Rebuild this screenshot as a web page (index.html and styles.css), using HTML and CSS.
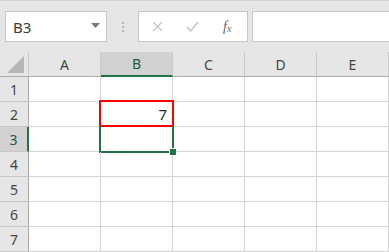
FILE: index.html
```html
<!DOCTYPE html>
<html lang="ja">
<head>
    <meta charset="UTF-8">
    <title>Excel</title>
    <link rel="stylesheet" href="styles.css">
</head>
<body>
    <div class="formula-bar">
        <div class="name-box">
            <span class="name-text">B3</span>
            <svg class="drop" width="9" height="5" viewBox="0 0 9 5"><path d="M0 0H9L4.5 5Z" fill="#7a7a7a"/></svg>
        </div>
        <div class="dots"><i></i><i></i><i></i></div>
        <div class="fx-box">
            <svg class="ico" width="11" height="11" viewBox="0 0 11 11"><path d="M1 1L10 10M10 1L1 10" stroke="#c3c3c3" stroke-width="1.3" fill="none"/></svg>
            <svg class="ico" width="13" height="11" viewBox="0 0 13 11"><path d="M1 6L4.5 10L12 1" stroke="#c3c3c3" stroke-width="1.4" fill="none"/></svg>
            <span class="fx">f<sub>x</sub></span>
        </div>
        <div class="formula-input"></div>
    </div>

    <div class="sheet">
        <div class="hd corner">
            <svg width="18" height="17" viewBox="0 0 18 17"><path d="M17 0V17H0Z" fill="#b5b5b5"/></svg>
        </div>
        <div class="hd col">A</div>
        <div class="hd col sel-col">B</div>
        <div class="hd col">C</div>
        <div class="hd col">D</div>
        <div class="hd col">E</div>

        <div class="hd row">1</div>
        <div class="cell"></div><div class="cell"></div><div class="cell"></div><div class="cell"></div><div class="cell"></div>

        <div class="hd row">2</div>
        <div class="cell"></div><div class="cell num red-box">7</div><div class="cell"></div><div class="cell"></div><div class="cell"></div>

        <div class="hd row sel-row">3</div>
        <div class="cell"></div><div class="cell active"><span class="handle"></span></div><div class="cell"></div><div class="cell"></div><div class="cell"></div>

        <div class="hd row">4</div>
        <div class="cell"></div><div class="cell"></div><div class="cell"></div><div class="cell"></div><div class="cell"></div>

        <div class="hd row">5</div>
        <div class="cell"></div><div class="cell"></div><div class="cell"></div><div class="cell"></div><div class="cell"></div>

        <div class="hd row">6</div>
        <div class="cell"></div><div class="cell"></div><div class="cell"></div><div class="cell"></div><div class="cell"></div>

        <div class="hd row">7</div>
        <div class="cell"></div><div class="cell"></div><div class="cell"></div><div class="cell"></div><div class="cell"></div>
    </div>
</body>
</html>
```

FILE: styles.css
```css
body {
    margin: 0;
    width: 389px;
    height: 252px;
    overflow: hidden;
    background-color: #fff;
    font-family: "Noto Sans", "Noto Sans CJK JP", sans-serif;
}
.formula-bar {
    height: 51px;
    box-sizing: border-box;
    border-top: 1px solid #d4d4d4;
    background-color: #e6e6e6;
    display: flex;
    align-items: flex-start;
    padding: 10px 0 0 5px;
}
.name-box {
    width: 102px;
    height: 31px;
    box-sizing: border-box;
    background-color: #fff;
    border: 1px solid #c6c6c6;
    display: flex;
    align-items: center;
    justify-content: space-between;
    padding: 0 6px 0 7px;
}
.name-text {
    font-size: 15px;
    color: #3a3a3a;
}
.drop {
    margin-top: -2px;
}
.dots {
    width: 31px;
    height: 31px;
    display: flex;
    flex-direction: column;
    align-items: center;
    justify-content: center;
    gap: 2px;
}
.dots i {
    display: block;
    width: 2px;
    height: 2px;
    background-color: #b3b3b3;
}
.fx-box {
    width: 110px;
    height: 31px;
    box-sizing: border-box;
    background-color: #fff;
    border: 1px solid #c6c6c6;
    display: flex;
    align-items: center;
    padding-left: 13px;
    gap: 23px;
}
.fx {
    font-family: "Liberation Serif", serif;
    font-style: italic;
    font-size: 14px;
    color: #6a6a6a;
    margin-left: 1px;
}
.fx sub {
    font-size: 10px;
    vertical-align: -1px;
}
.formula-input {
    flex: 1;
    height: 31px;
    box-sizing: border-box;
    margin-left: 4px;
    margin-right: -2px;
    background-color: #fff;
    border: 1px solid #c6c6c6;
}
.sheet {
    display: grid;
    grid-template-columns: 29px repeat(5, 72px);
    grid-template-rows: 25px repeat(7, 25px);
    border-top: 1px solid #e6e6e6;
}
.hd {
    background-color: #e6e6e6;
    color: #444;
    font-size: 14px;
    display: flex;
    align-items: center;
    justify-content: center;
    box-sizing: border-box;
}
.col {
    border-right: 1px solid #c8c8c8;
    border-bottom: 1px solid #ababab;
}
.corner {
    border-right: 1px solid #c8c8c8;
    border-bottom: 1px solid #ababab;
    align-items: flex-end;
    justify-content: flex-end;
    padding: 0 3px 3px 0;
}
.corner svg {
    display: block;
}
.row {
    border-right: 1px solid #ababab;
    border-bottom: 1px solid #c8c8c8;
}
.sel-col {
    background-color: #d2d2d2;
    border-bottom: 2px solid #217346;
    color: #1e5b3a;
}
.sel-row {
    background-color: #d2d2d2;
    border-right: 2px solid #217346;
    color: #1e5b3a;
}
.cell {
    border-right: 1px solid #d4d4d4;
    border-bottom: 1px solid #d4d4d4;
    box-sizing: border-box;
    position: relative;
}
.num {
    font-size: 15px;
    color: #2a2a2a;
    text-align: right;
    padding-right: 5px;
    line-height: 24px;
}
.red-box::after {
    content: "";
    position: absolute;
    left: -2px;
    top: -2px;
    right: -2px;
    bottom: -1px;
    border: 2px solid #ff0000;
}
.active::after {
    content: "";
    position: absolute;
    left: -2px;
    top: -1px;
    right: -2px;
    bottom: -2px;
    border: 2px solid #217346;
    border-top: none;
}
.handle {
    position: absolute;
    right: -4px;
    bottom: -4px;
    width: 6px;
    height: 6px;
    background-color: #217346;
    border-left: 1px solid #fff;
    border-top: 1px solid #fff;
    z-index: 1;
}
```
